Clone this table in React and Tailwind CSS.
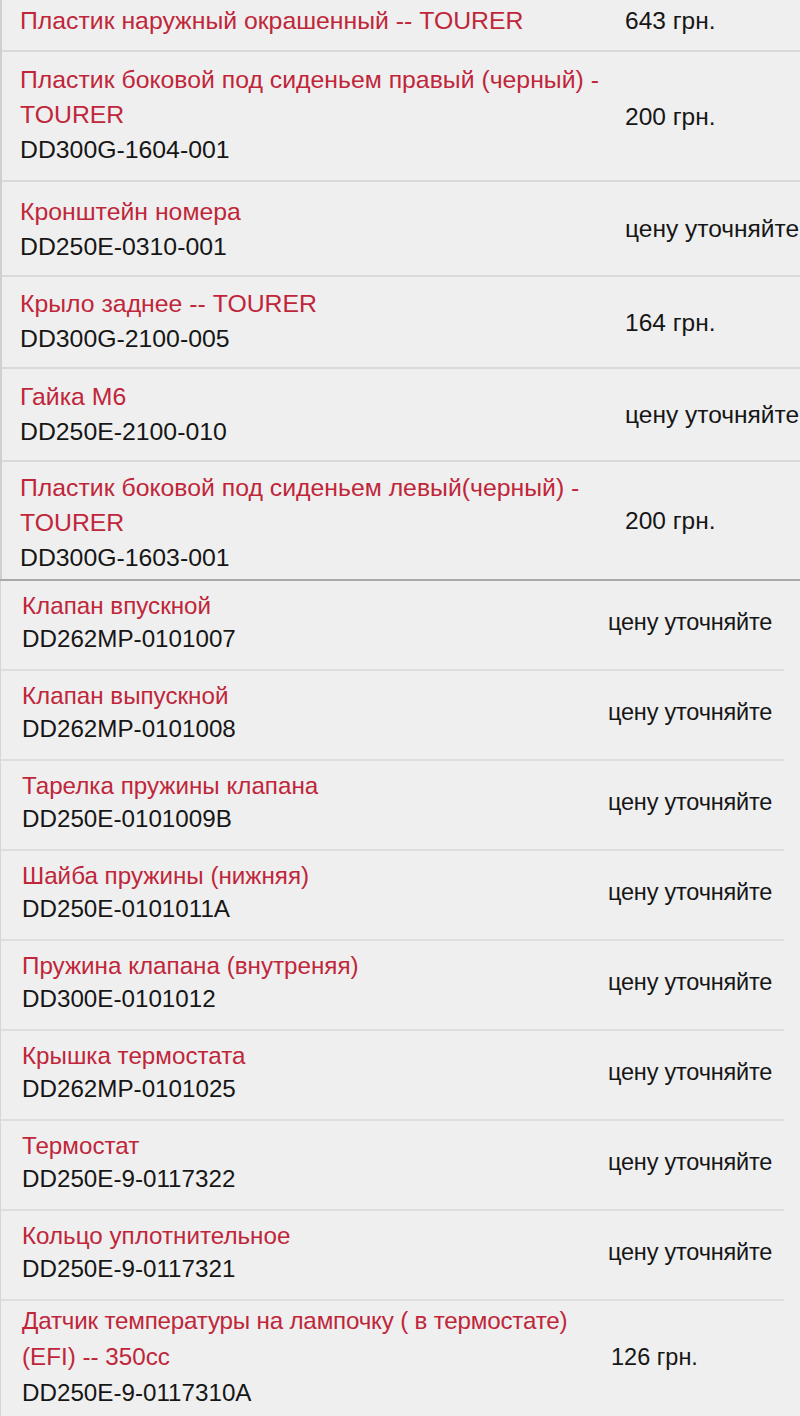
const top = [
  { lines: ['Пластик наружный окрашенный -- TOURER'], code: null, price: '643 грн.', h: 'h-[52px]', pad: 'pt-[3px]' },
  { lines: ['Пластик боковой под сиденьем правый (черный) -', 'TOURER'], code: 'DD300G-1604-001', price: '200 грн.', h: 'h-[130px]', pad: 'pt-[10px]' },
  { lines: ['Кронштейн номера'], code: 'DD250E-0310-001', price: 'цену уточняйте', h: 'h-[95px]', pad: 'pt-[12px]' },
  { lines: ['Крыло заднее -- TOURER'], code: 'DD300G-2100-005', price: '164 грн.', h: 'h-[92px]', pad: 'pt-[9px]' },
  { lines: ['Гайка М6'], code: 'DD250E-2100-010', price: 'цену уточняйте', h: 'h-[93px]', pad: 'pt-[10px]' },
  { lines: ['Пластик боковой под сиденьем левый(черный) -', 'TOURER'], code: 'DD300G-1603-001', price: '200 грн.', h: 'h-[117px]', pad: 'pt-[8px]' },
]

const bottom = [
  { name: 'Клапан впускной', code: 'DD262MP-0101007', price: 'цену уточняйте' },
  { name: 'Клапан выпускной', code: 'DD262MP-0101008', price: 'цену уточняйте' },
  { name: 'Тарелка пружины клапана', code: 'DD250E-0101009B', price: 'цену уточняйте' },
  { name: 'Шайба пружины (нижняя)', code: 'DD250E-0101011A', price: 'цену уточняйте' },
  { name: 'Пружина клапана (внутреняя)', code: 'DD300E-0101012', price: 'цену уточняйте' },
  { name: 'Крышка термостата', code: 'DD262MP-0101025', price: 'цену уточняйте' },
  { name: 'Термостат', code: 'DD250E-9-0117322', price: 'цену уточняйте' },
  { name: 'Кольцо уплотнительное', code: 'DD250E-9-0117321', price: 'цену уточняйте' },
]

export default function App() {
  return (
    <div className="w-[800px] h-[1416px] overflow-hidden bg-[#efefef] text-[#161616]" style={{ fontFamily: '"Liberation Sans", Arial, sans-serif' }}>
      {/* upper block */}
      <div className="border-l-2 border-[#d0d0d0]">
        {top.map((row, i) => (
          <div key={i} className={`flex ${row.h} ${i < top.length - 1 ? 'border-b-2 border-[#dadada]' : ''}`}>
            <div className={`w-[605px] pl-[18px] ${row.pad} text-[24.8px] leading-[35px]`}>
              {row.lines.map((l, j) => <div key={j} className="text-[#c0263a]">{l}</div>)}
              {row.code && <div>{row.code}</div>}
            </div>
            <div className={`flex-1 flex pl-[18px] text-[24.5px] leading-[35px] whitespace-nowrap ${i === 0 ? 'items-start pt-[3px]' : 'items-center'}`}>
              {row.price}
            </div>
          </div>
        ))}
      </div>
      <div className="h-[2px] bg-[#a9a9a9]" />

      {/* lower block */}
      <div className="border-l border-[#d6d6d6]">
        {bottom.map((row, i) => (
          <div key={i} className="flex h-[90px] w-[783px] border-b-2 border-[#dedede]">
            <div className="w-[586px] pl-[21px] pt-[8px] text-[24.2px] leading-[33px]">
              <div className="text-[#c0263a]">{row.name}</div>
              <div>{row.code}</div>
            </div>
            <div className="flex-1 flex items-center pl-[21px] pb-[4px] text-[23.5px] tracking-[-0.2px] whitespace-nowrap">
              {row.price}
            </div>
          </div>
        ))}
        <div className="flex h-[130px] w-[783px]">
          <div className="w-[586px] pl-[21px] pt-[2px] text-[24.2px] leading-[36px]">
            <div className="text-[#c0263a] whitespace-nowrap tracking-[-0.2px]">Датчик температуры на лампочку ( в термостате)</div>
            <div className="text-[#c0263a]">(EFI) -- 350cc</div>
            <div>DD250E-9-0117310A</div>
          </div>
          <div className="flex-1 flex items-start pt-[38px] pl-[24px] text-[23.5px] leading-[36px] whitespace-nowrap">
            126 грн.
          </div>
        </div>
      </div>
    </div>
  )
}
